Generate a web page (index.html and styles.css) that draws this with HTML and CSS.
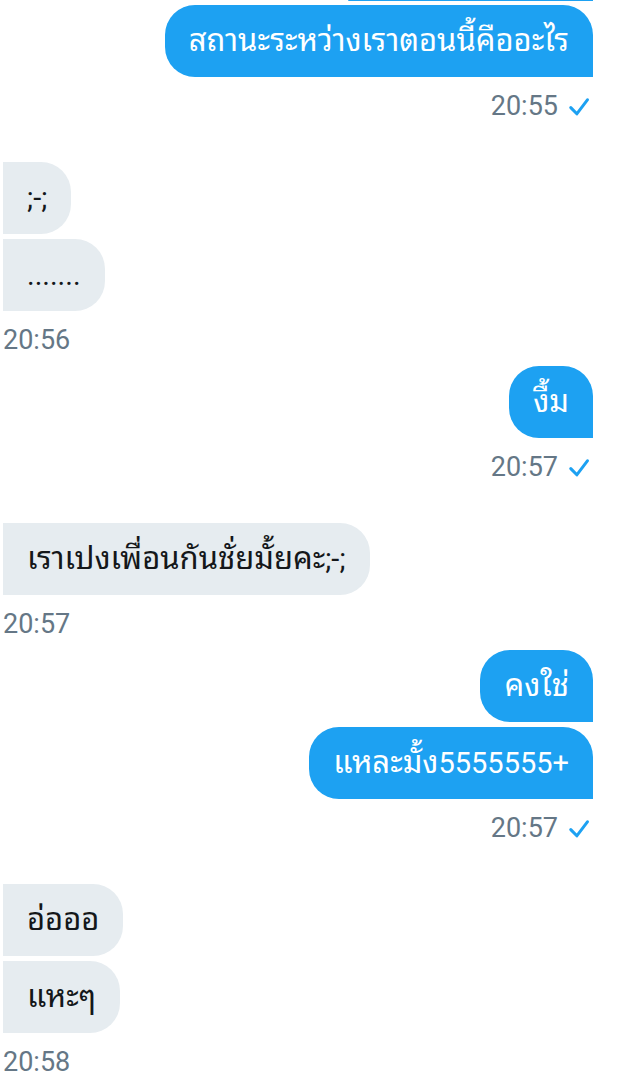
FILE: index.html
```html
<!DOCTYPE html>
<html lang="th">
<head>
<meta charset="utf-8">
<title>Messages</title>
<link rel="stylesheet" href="styles.css">
</head>
<body>
<div class="chat">
  <div class="prev-tail"></div>

  <div class="group sent">
    <div class="bubble"><span class="th">สถานะระหว่างเราตอนนี้คืออะไร</span></div>
    <div class="meta"><span class="time">20:55</span><svg class="check" viewBox="0 0 20 20" width="20" height="20"><path d="M1.8 10.6 L7.8 16.8 L18.4 2.8" fill="none" stroke="#1da1f2" stroke-width="3" stroke-linecap="round" stroke-linejoin="round"/></svg></div>
  </div>

  <div class="group received">
    <div class="bubble">;-;</div>
    <div class="bubble">.......</div>
    <div class="meta"><span class="time">20:56</span></div>
  </div>

  <div class="group sent">
    <div class="bubble"><span class="th">งื้ม</span></div>
    <div class="meta"><span class="time">20:57</span><svg class="check" viewBox="0 0 20 20" width="20" height="20"><path d="M1.8 10.6 L7.8 16.8 L18.4 2.8" fill="none" stroke="#1da1f2" stroke-width="3" stroke-linecap="round" stroke-linejoin="round"/></svg></div>
  </div>

  <div class="group received">
    <div class="bubble"><span class="th">เราเปงเพื่อนกันชั่ยมั้ยคะ</span>;-;</div>
    <div class="meta"><span class="time">20:57</span></div>
  </div>

  <div class="group sent">
    <div class="bubble"><span class="th">คงใช่</span></div>
    <div class="bubble"><span class="th">แหละมั้ง</span>5555555+</div>
    <div class="meta"><span class="time">20:57</span><svg class="check" viewBox="0 0 20 20" width="20" height="20"><path d="M1.8 10.6 L7.8 16.8 L18.4 2.8" fill="none" stroke="#1da1f2" stroke-width="3" stroke-linecap="round" stroke-linejoin="round"/></svg></div>
  </div>

  <div class="group received">
    <div class="bubble"><span class="th">อ่อออ</span></div>
    <div class="bubble"><span class="th">แหะๆ</span></div>
    <div class="meta"><span class="time">20:58</span></div>
  </div>
</div>
</body>
</html>
```

FILE: styles.css
```css
html, body {
  margin: 0;
  padding: 0;
  background: #ffffff;
}

body {
  font-family: Roboto, "Noto Sans Thai Looped", "Noto Looped Thai", "Noto Sans Thai", "Noto Sans", "DejaVu Sans", sans-serif;
  width: 617px;
  height: 1085px;
  overflow: hidden;
}

.chat {
  display: flex;
  flex-direction: column;
  padding: 0 24px 0 3px;
}

.prev-tail {
  align-self: flex-end;
  width: 245px;
  height: 1px;
  background: #1da1f2;
  border-radius: 0 0 0 2px;
  margin-bottom: 4px;
}

.group {
  display: flex;
  flex-direction: column;
  gap: 5px;
}

.group.sent {
  align-items: flex-end;
  margin-bottom: 40px;
}

.group.received {
  align-items: flex-start;
  margin-bottom: 10px;
}

.bubble {
  font-size: 29px;
  line-height: 38px;
  height: 38px;
  padding: 17px 24px;
  white-space: nowrap;
}

.th {
  font-size: 31px;
  line-height: 30px;
}

.sent .bubble {
  background: #1da1f2;
  color: #ffffff;
  border-radius: 30px 30px 0 30px;
}

.received .bubble {
  background: #e6ecf0;
  color: #14171a;
  border-radius: 0 30px 30px 0;
}

.meta {
  display: flex;
  align-items: center;
  margin-top: 8px;
  height: 32px;
  color: #657786;
}

.sent .meta {
  padding-right: 4px;
  gap: 11px;
}

.time {
  font-size: 27px;
  line-height: 32px;
}

.check {
  display: block;
  margin-top: 2px;
}
```
